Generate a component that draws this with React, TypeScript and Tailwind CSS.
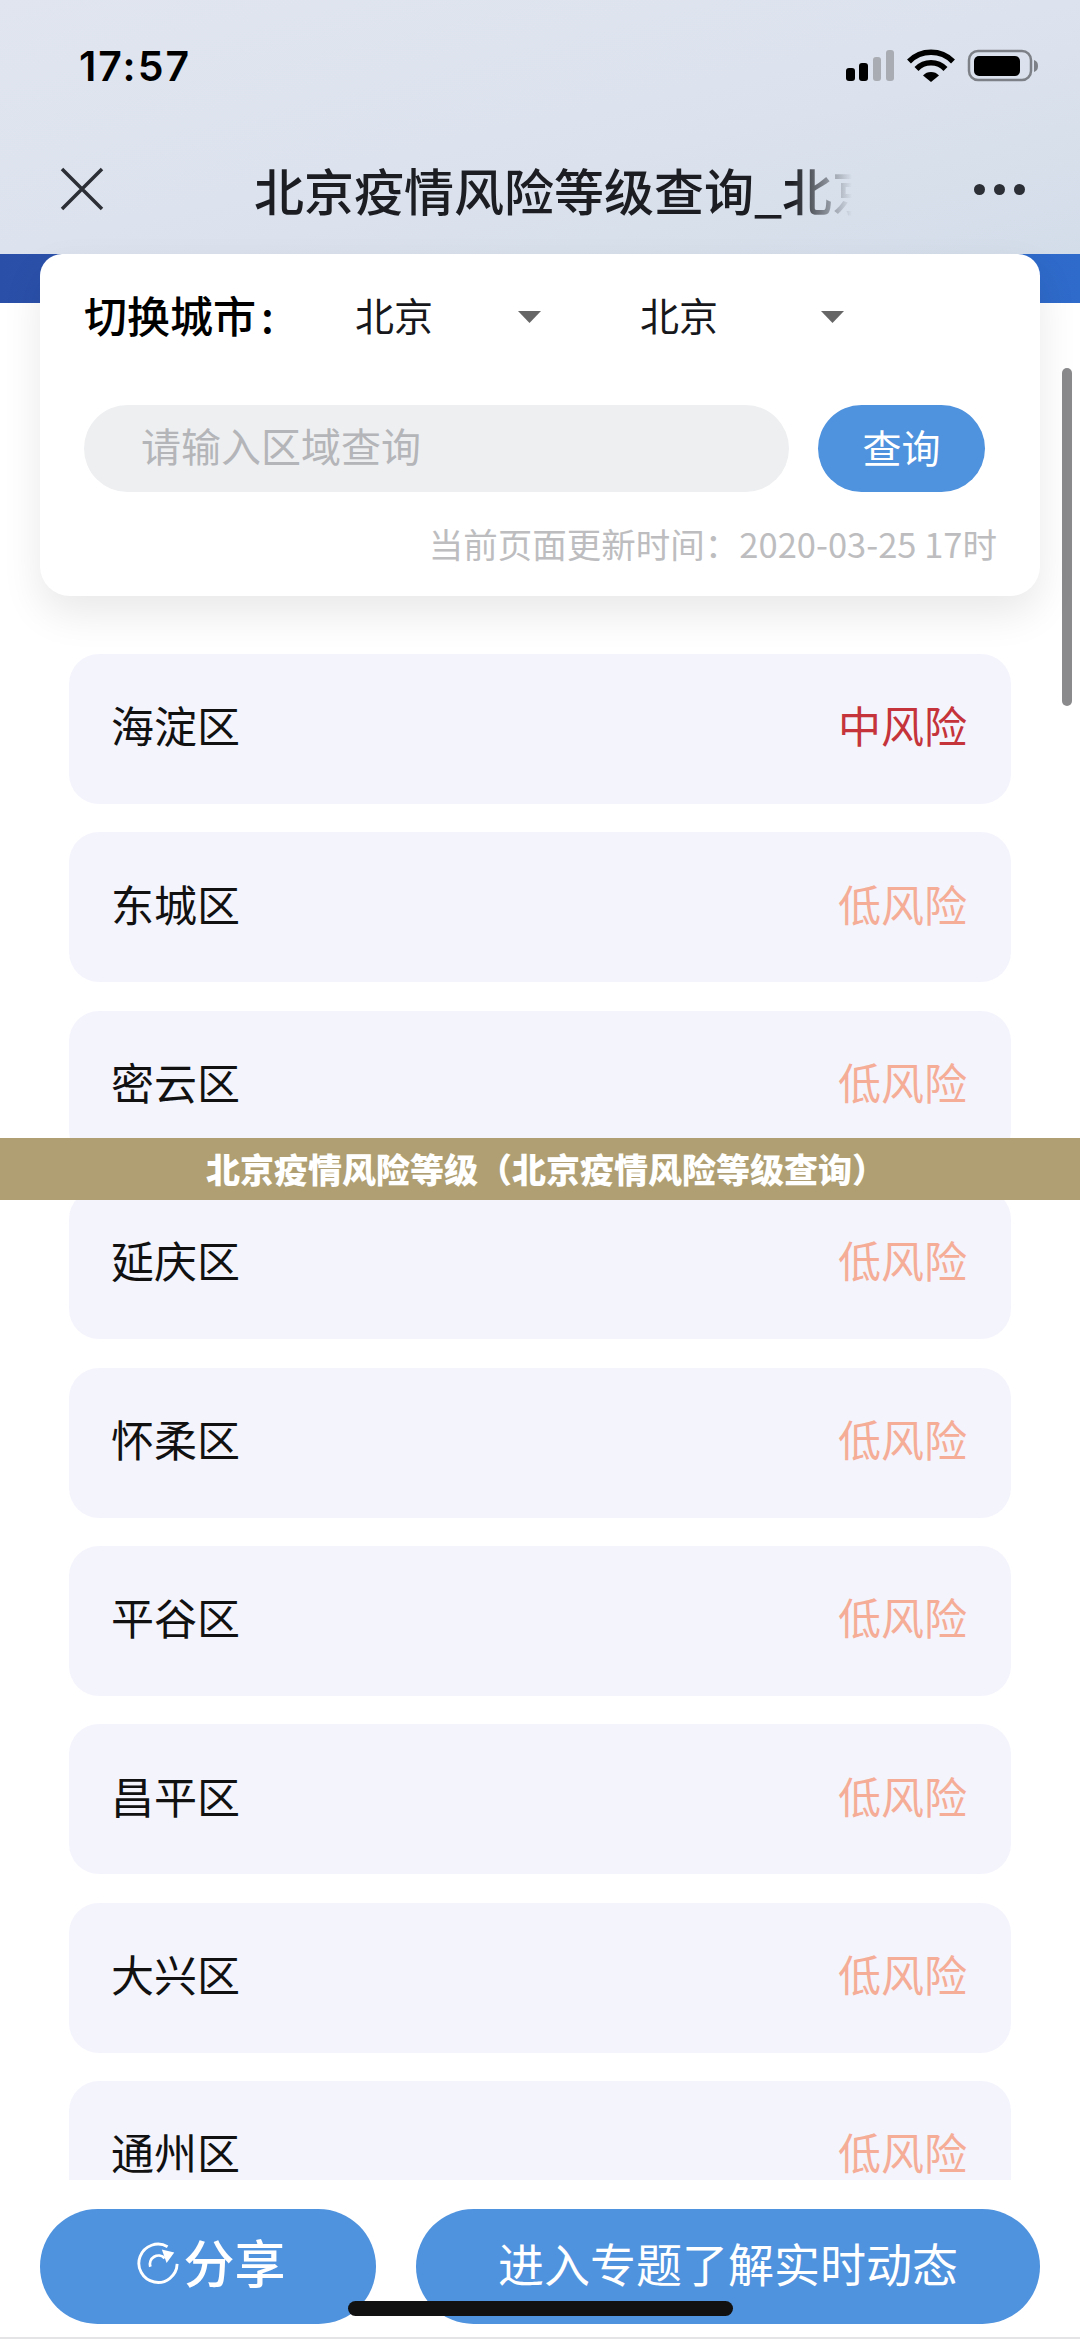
const cjk = 'font-["Noto_Sans_CJK_SC","Liberation_Sans",sans-serif]'

const districts = [
  { name: '海淀区', risk: '中风险', high: true },
  { name: '东城区', risk: '低风险' },
  { name: '密云区', risk: '低风险' },
  { name: '延庆区', risk: '低风险' },
  { name: '怀柔区', risk: '低风险' },
  { name: '平谷区', risk: '低风险' },
  { name: '昌平区', risk: '低风险' },
  { name: '大兴区', risk: '低风险' },
  { name: '通州区', risk: '低风险' },
]

function StatusIcons() {
  return (
    <svg width="194" height="34" viewBox="0 0 194 34" className="block">
      <rect x="0" y="19" width="9" height="13" rx="3" fill="#000" />
      <rect x="13" y="14" width="9" height="18" rx="3" fill="#000" />
      <rect x="27" y="8" width="8" height="24" rx="3" fill="#a9adb3" />
      <rect x="40" y="1" width="8" height="31" rx="3" fill="#a9adb3" />
      <path d="M63 12.5a31 31 0 0 1 44 0" fill="none" stroke="#000" strokeWidth="5.5" />
      <path d="M70.5 20a20 20 0 0 1 29 0" fill="none" stroke="#000" strokeWidth="5.5" />
      <path d="M77 26.5a11 11 0 0 1 16 0L85 33z" fill="#000" />
      <rect x="123" y="2" width="62" height="29" rx="9" fill="none" stroke="#7d8086" strokeWidth="2.5" />
      <rect x="128" y="7" width="46" height="20" rx="5" fill="#000" />
      <path d="M188 11c3 1 4 3 4 6s-1 5-4 6z" fill="#7d8086" />
    </svg>
  )
}

function CaretDown() {
  return (
    <svg width="23" height="12" viewBox="0 0 23 12" className="block">
      <path d="M0 0h23L11.500 12z" fill="#666" />
    </svg>
  )
}

function ShareIcon() {
  return (
    <svg width="44" height="44" viewBox="0 0 46 44" className="block" fill="none" stroke="#fff" strokeWidth="3">
      <path d="M33 6A20 20 0 1 0 43 24" />
      <path d="M15 27a9 9 0 0 1 15-9" />
      <path d="M27 9l13 3-8 11z" fill="#fff" stroke="none" />
    </svg>
  )
}

export default function App() {
  return (
    <div className={`relative flex h-[2339px] w-[1080px] flex-col overflow-hidden bg-white ${cjk}`}>
      {/* top bar */}
      <header className="h-[254px] shrink-0 bg-gradient-to-br from-[#e0e5ef] via-[#dde3ee] to-[#d3dde9]">
        <div className="flex items-center justify-between pl-[79px] pr-[40px] pt-[41px]">
          <span className='font-["Inter",sans-serif] text-[41px] leading-[50px] font-semibold tracking-[2px] text-black'>17:57</span>
          <StatusIcons />
        </div>
        <div className="mt-[63px] flex items-center pl-[60px] pr-[55px]">
          <svg width="44" height="44" viewBox="0 0 44 44" className="shrink-0" stroke="#2c2f36" strokeWidth="3.500" fill="none">
            <path d="M2 2l40 40M42 2L2 42" />
          </svg>
          <div className="ml-[150px] w-[598px] overflow-hidden whitespace-nowrap bg-gradient-to-r from-[#1b1d22] from-90% to-transparent bg-clip-text text-[50px] leading-[70px] font-medium text-transparent">
            北京疫情风险等级查询_北京
          </div>
          <div className="ml-auto flex gap-[9px]">
            <span className="size-[11px] rounded-full bg-[#2c2f36]" />
            <span className="size-[11px] rounded-full bg-[#2c2f36]" />
            <span className="size-[11px] rounded-full bg-[#2c2f36]" />
          </div>
        </div>
      </header>

      <div className="h-[49px] shrink-0 bg-gradient-to-r from-[#2a4fa8] to-[#2f6bcb]" />

      {/* city card */}
      <section className="relative z-10 mx-[40px] -mt-[49px] h-[342px] shrink-0 rounded-b-[30px] rounded-t-[22px] bg-white px-[44px] pt-[33px] shadow-[0_18px_40px_rgba(0,0,0,0.09)]">
        <div className="flex h-[60px] items-center text-[39px] text-[#17181b]">
          <span className="flex w-[271px] pb-[6px] text-[43px] font-medium text-black">
            切换城市
            <span className="ml-[5px]">:</span>
          </span>
          <span className="w-[163px] pb-[6px]">北京</span>
          <CaretDown />
          <span className="ml-[99px] w-[181px] pb-[6px]">北京</span>
          <CaretDown />
        </div>
        <div className="mt-[58px] flex h-[87px] gap-[29px]">
          <div className="flex w-[705px] items-center rounded-full bg-[#eeeff1] pb-[8px] pl-[57px] text-[40px] text-[#b4b5b8]">
            请输入区域查询
          </div>
          <div className="flex w-[167px] items-center justify-center rounded-full bg-[#4f92de] pb-[4px] text-[39px] text-white">
            查询
          </div>
        </div>
        <p className="mt-[28px] -mr-[1px] text-right text-[34.500px] leading-[46px] whitespace-nowrap text-[#bdbdc0]">
          当前页面更新时间：2020-03-25 17时
        </p>
      </section>

      {/* district list */}
      <main className="mt-[58px] min-h-0 flex-1 overflow-hidden px-[69px]">
        <div className="flex flex-col gap-[28.400px]">
          {districts.map((d) => (
            <div key={d.name} className="flex h-[150px] shrink-0 items-center justify-between rounded-[30px] bg-[#f4f4fd] pr-[44px] pb-[9px] pl-[42px]">
              <span className="text-[43px] text-[#111]">{d.name}</span>
              <span className={`text-[43px] ${d.high ? 'text-[#c5343a]' : 'text-[#f5ad97]'}`}>{d.risk}</span>
            </div>
          ))}
        </div>
      </main>

      {/* bottom actions */}
      <footer className="flex h-[159px] shrink-0 gap-[40px] bg-white px-[40px] pt-[29px]">
        <button className="flex h-[115px] w-[336px] items-center justify-center gap-[3px] rounded-full bg-[#4f92de] pb-[10px] pl-[6px] text-[51px] font-medium text-white">
          <ShareIcon />
          分享
        </button>
        <button className="flex h-[115px] w-[624px] items-center justify-center rounded-full bg-[#4f92de] pb-[8px] text-[46px] text-white">
          进入专题了解实时动态
        </button>
      </footer>

      {/* overlays */}
      <div className="absolute top-[368px] right-[8px] h-[338px] w-[10px] rounded-full bg-[#8a8a8c]" />
      <div className="absolute top-[1138px] left-0 flex h-[62px] w-full items-center justify-center bg-[#ab9a6a]/95 pl-[12px] pb-[2px] text-[34px] font-black text-white">
        北京疫情风险等级（北京疫情风险等级查询）
      </div>
      <div className="absolute top-[2301px] left-[348px] h-[15px] w-[385px] rounded-full bg-[#111]" />
      <div className="absolute bottom-0 left-0 h-[2px] w-full bg-[#e4e4e6]" />
    </div>
  )
}
